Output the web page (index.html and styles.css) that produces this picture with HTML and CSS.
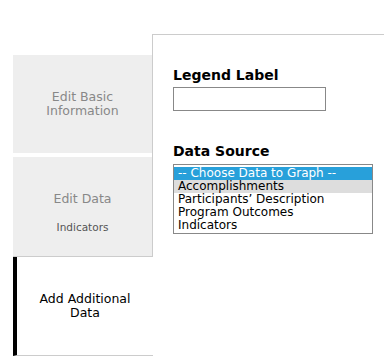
FILE: index.html
```html
<!DOCTYPE html>
<html lang="en">
<head>
    <meta charset="UTF-8">
    <title>Graph Data</title>
    <link rel="stylesheet" href="styles.css">
</head>
<body>
    <div class="wrapper">
        <div class="tabs">
            <div class="tab tab-basic">Edit Basic<br>Information</div>
            <div class="tab tab-data">
                <div class="tab-title">Edit Data</div>
                <div class="tab-sub">Indicators</div>
            </div>
            <div class="tab tab-active">Add Additional<br>Data</div>
        </div>

        <div class="panel">
            <label class="field-label">Legend Label</label>
            <input type="text" class="text-input">

            <label class="field-label source-label">Data Source</label>
            <ul class="listbox">
                <li class="selected">-- Choose Data to Graph --</li>
                <li class="hover">Accomplishments</li>
                <li>Participants’ Description</li>
                <li>Program Outcomes</li>
                <li>Indicators</li>
            </ul>
        </div>
    </div>
</body>
</html>
```

FILE: styles.css
```css
body {
    margin: 0;
    padding: 0;
    font-family: "DejaVu Sans", Verdana, sans-serif;
    background: #fff;
    color: #000;
}

.wrapper {
    display: flex;
    align-items: flex-start;
    padding-left: 13px;
    overflow: hidden;
}

.tabs {
    width: 140px;
    flex-shrink: 0;
    margin-top: 55px;
    margin-right: -1px;
    position: relative;
    z-index: 1;
}

.tab {
    box-sizing: border-box;
    font-size: 12.5px;
    line-height: 14px;
    text-align: center;
    color: #888;
    background: #eee;
    border-right: 1px solid #ccc;
}

.tab-basic {
    height: 98px;
    margin-bottom: 4px;
    display: flex;
    align-items: center;
    justify-content: center;
}

.tab-data {
    height: 100px;
    padding-top: 35px;
    border-bottom: 1px solid #ccc;
}

.tab-sub {
    margin-top: 15px;
    font-size: 10.5px;
    line-height: 12px;
    color: #555;
}

.tab-active {
    height: 99px;
    color: #000;
    background: #fff;
    border-right: none;
    border-left: 4px solid #000;
    border-bottom: 1px solid #ccc;
    display: flex;
    align-items: center;
    justify-content: center;
}

.panel {
    flex: 1;
    box-sizing: border-box;
    min-width: 260px;
    height: 322px;
    margin-top: 34px;
    padding: 32px 0 0 20px;
    border: 1px solid #ccc;
    border-right: none;
    border-bottom: none;
}

.field-label {
    display: block;
    font-size: 14px;
    font-weight: bold;
    line-height: 17px;
}

.text-input {
    display: block;
    box-sizing: border-box;
    width: 153px;
    height: 24px;
    margin: 3px 0 0;
    border: 1px solid #888;
    padding: 2px 4px;
}

.source-label {
    margin-top: 32px;
}

.listbox {
    list-style: none;
    box-sizing: border-box;
    width: 200px;
    height: 70px;
    margin: 4px 0 0;
    padding: 2px 0 0;
    border: 1px solid #888;
    font-size: 12px;
    line-height: 13px;
}

.listbox li {
    padding-left: 4px;
    white-space: nowrap;
}

.listbox .selected {
    background: #28a0da;
    color: #fff;
}

.listbox .hover {
    background: #ddd;
}
```
